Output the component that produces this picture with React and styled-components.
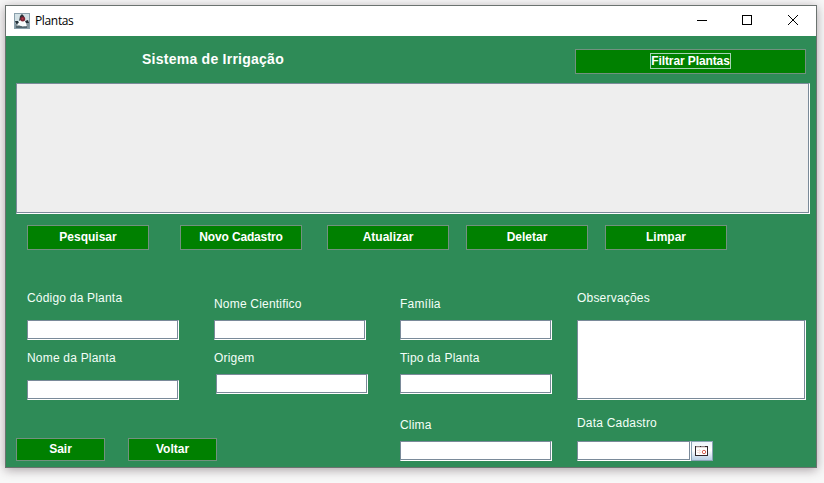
import React from "react";
import styled, { createGlobalStyle } from "styled-components";

const GlobalStyle = createGlobalStyle`
  * { box-sizing: border-box; }
  body { margin: 0; background: #f8f8f8; overflow: hidden; }
`;

const Desktop = styled.div`
  width: 824px;
  height: 483px;
  padding: 5px 7px 15px 5px;
  overflow: hidden;
  font-family: "Liberation Sans", Arial, sans-serif;
`;

const Window = styled.div`
  width: 812px;
  height: 463px;
  border: 1px solid #6b7370;
  background: #2e8b57;
  box-shadow: 0 2px 10px rgba(60, 40, 50, 0.42);
`;

const TitleBar = styled.header`
  display: flex;
  align-items: center;
  height: 30px;
  padding: 0 6px 0 8px;
  background: #fff;
`;

const WindowTitle = styled.span`
  flex: 1;
  margin-left: 5px;
  font: 12px/16px "Open Sans", "Noto Sans", sans-serif;
  letter-spacing: -0.35px;
  color: #000;
`;

const WindowControls = styled.svg`
  display: block;
  width: 138px;
  height: 30px;
`;

const Header = styled.div`
  display: flex;
  justify-content: space-between;
  align-items: flex-start;
  height: 47px;
  padding: 13px 10px 0 136px;
`;

const Heading = styled.h1`
  margin: 2px 0 0;
  font-size: 14px;
  line-height: 16px;
  letter-spacing: 0.25px;
  color: #fff;
`;

const Button = styled.button`
  display: flex;
  align-items: center;
  justify-content: center;
  width: ${(p) => p.$width}px;
  height: ${(p) => p.$height || 25}px;
  padding: 0 0 2px;
  border: 1px solid #72917f;
  background: #008000;
  color: #fff;
  font: bold 12px/14px "Liberation Sans", Arial, sans-serif;
  letter-spacing: ${(p) => p.$spacing || 0}px;
`;

const FocusLabel = styled.span`
  height: 16px;
  border: 1px solid #a5d3b5;
  line-height: 14px;
`;

/* Two-line etched frame: grey/white outside, white/grey inside. */
const Etched = styled.div`
  width: ${(p) => p.$width}px;
  height: ${(p) => p.$height || 20}px;
  border: 1px solid;
  border-color: #7a8a99 #fff #fff #7a8a99;
  background: ${(p) => p.$fill || "#fff"};
  box-shadow: inset -1px -1px 0 #7a8a99;
`;

const TableArea = styled.div`
  padding-left: 10px;
  height: 131px;
`;

const Actions = styled.div`
  display: grid;
  grid-template-columns: 153px 147px 139px 139px 122px;
  padding: 11px 0 0 21px;
  height: 71px;
`;

const Form = styled.div`
  display: grid;
  grid-template-columns: 187px 186px 177px 229px;
  height: 182px;
  padding-left: 21px;
`;

const Column = styled.div`
  display: flex;
  flex-direction: column;
  align-items: flex-start;
`;

const Field = styled.div`
  height: ${(p) => p.$height}px;
  padding-top: ${(p) => p.$top}px;
`;

const Label = styled.label`
  display: block;
  height: 14px;
  margin-bottom: ${(p) => p.$gap}px;
  font-size: 12px;
  line-height: 14px;
  letter-spacing: 0.2px;
  white-space: nowrap;
  color: #f4fff8;
`;

const Indent = styled.div`
  padding-left: 2px;
`;

const Footer = styled.div`
  display: flex;
  gap: 23px;
  margin: 38px 0 0 -11px;
`;

const DateRow = styled.div`
  display: flex;
`;

const DateButton = styled.button`
  display: flex;
  align-items: flex-start;
  width: 22px;
  height: 20px;
  padding: 4px 0 0 3px;
  border: 1px solid #8aa3b5;
  background: linear-gradient(#edf4fa, #fff 45%, #b8cfe5);

  svg { display: block; flex: none; }
`;

function JavaIcon() {
  return (
    <svg width="16" height="16" viewBox="0 0 16 16">
      <rect x=".5" y=".5" width="15" height="15" fill="#d3e1e6" stroke="#8ba0ac" />
      <path d="M1 11 L5 9 L11 10 L15 9 V15 H1Z" fill="#83949d" />
      <path d="M6 3 L9 1 L11 6 L13 14 L10 13 L7 14 L3 13 L5 8Z" fill="#fff" />
      <path d="M6 3 L8 1 L10 3 L11 7 L8 6 L5 8Z" fill="#29333b" />
      <path d="M1 8 L4 8 L5 10 L2 11Z M11 8 L14 7 L15 10 L12 10Z" fill="#26323a" />
      <path d="M2 13 L6 12 L9 14 L13 13 V15 H2Z" fill="#52656e" />
      <path d="M5 9 L10 8 L11 12 L7 13 L4 12Z" fill="#f7fbfc" />
      <circle cx="8.7" cy="6" r="2.5" fill="#7d2534" />
      <circle cx="8.5" cy="5.8" r="1" fill="#b93b4d" />
    </svg>
  );
}

function CalendarIcon() {
  return (
    <svg width="13" height="10" viewBox="0 0 13 10">
      <rect width="13" height="10" fill="#30282c" />
      <rect x="1" y="1" width="11" height="8" fill="#fff" />
      <path d="M1 .5H5M6 .5H10" stroke="#8d8284" />
      <path d="M1 1.5H12" stroke="#e8dedd" />
      <path d="M2 4.5H6M2 6.5H6M4.5 3V8" stroke="#f6e3dd" />
      <circle cx="9" cy="6" r="1.7" fill="#fff" stroke="#d86454" />
    </svg>
  );
}

function TextField({ label, height, top, gap, width = 152, boxHeight }) {
  return (
    <Field $height={height} $top={top}>
      <Label $gap={gap}>{label}</Label>
      <Etched $width={width} $height={boxHeight} />
    </Field>
  );
}

export default function App() {
  return (
    <>
      <GlobalStyle />
      <Desktop>
        <Window>
          <TitleBar>
            <JavaIcon />
            <WindowTitle>Plantas</WindowTitle>
            <WindowControls viewBox="0 0 138 30" fill="none" stroke="#000">
              <path d="M25 14.5h10" />
              <rect x="70.5" y="9.5" width="9" height="9" />
              <path d="M116 9l10 10M126 9l-10 10" />
            </WindowControls>
          </TitleBar>
          <Header>
            <Heading>Sistema de Irrigação</Heading>
            <Button $width={231} $spacing={-0.1}><FocusLabel>Filtrar Plantas</FocusLabel></Button>
          </Header>
          <TableArea><Etched $width={794} $height={131} $fill="#eee" /></TableArea>
          <Actions>
            <Button $width={122}>Pesquisar</Button>
            <Button $width={122} $spacing={-0.15}>Novo Cadastro</Button>
            <Button $width={122}>Atualizar</Button>
            <Button $width={122}>Deletar</Button>
            <Button $width={122}>Limpar</Button>
          </Actions>
          <Form>
            <Column>
              <TextField label="Código da Planta" height={60} top={6} gap={15} />
              <TextField label="Nome da Planta" height={55} top={6} gap={15} />
              <Footer>
                <Button $width={89} $height={23}>Sair</Button>
                <Button $width={89} $height={23}>Voltar</Button>
              </Footer>
            </Column>
            <Column>
              <TextField label="Nome Cientifico" height={60} top={12} gap={9} />
              <Field $height={54} $top={6}>
                <Label $gap={9}>Origem</Label>
                <Indent><Etched $width={152} /></Indent>
              </Field>
            </Column>
            <Column>
              <TextField label="Família" height={60} top={12} gap={9} />
              <TextField label="Tipo da Planta" height={60} top={6} gap={9} />
              <TextField label="Clima" height={60} top={13} gap={9} />
            </Column>
            <Column>
              <TextField label="Observações" height={115} top={6} gap={15} width={229} boxHeight={80} />
              <Field $height={60} $top={16}>
                <Label $gap={11}>Data Cadastro</Label>
                <DateRow>
                  <Etched $width={114} />
                  <DateButton aria-label="Data Cadastro"><CalendarIcon /></DateButton>
                </DateRow>
              </Field>
            </Column>
          </Form>
        </Window>
      </Desktop>
    </>
  );
}
